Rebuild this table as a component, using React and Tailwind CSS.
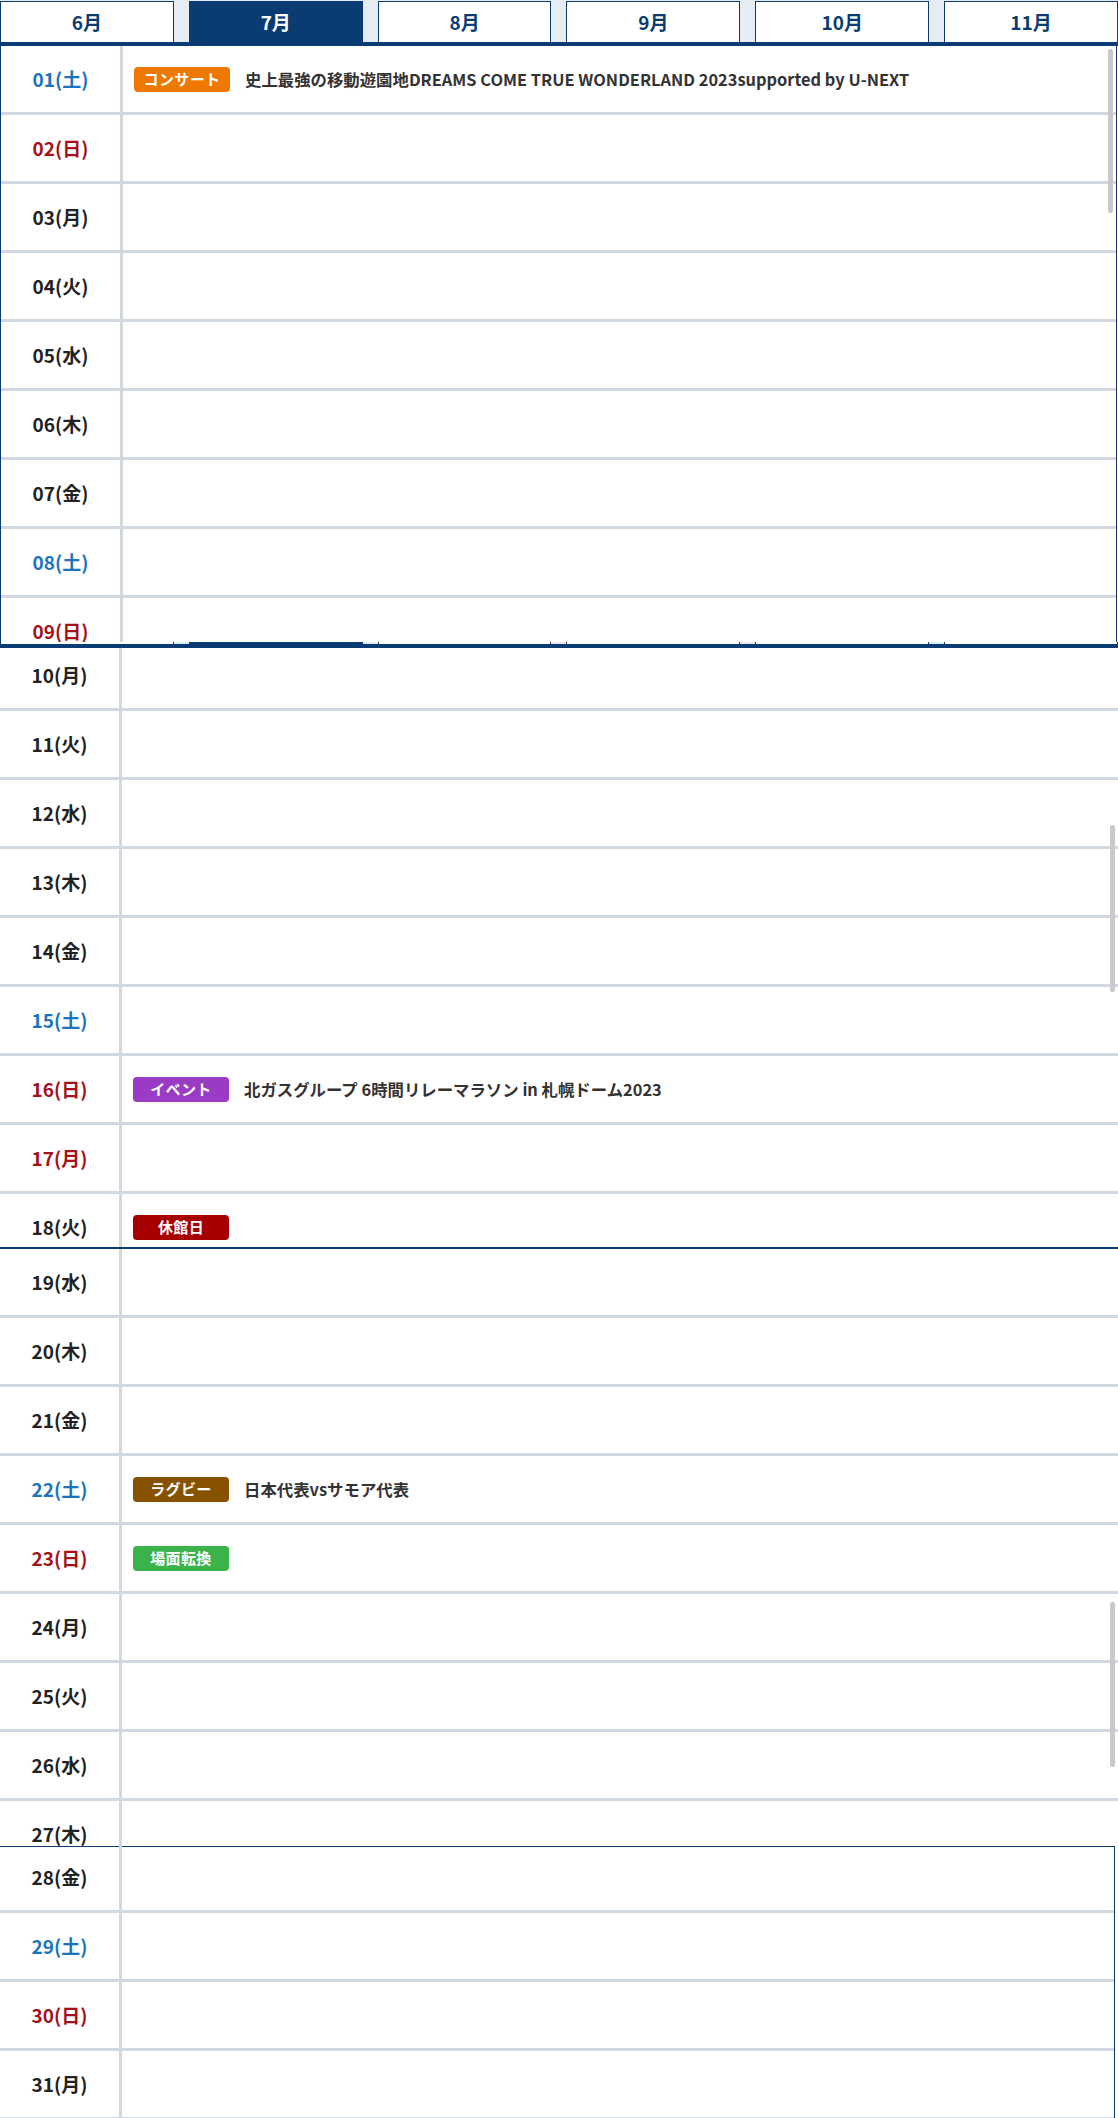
import React from "react";

const months = ["6月", "7月", "8月", "9月", "10月", "11月"];

const events = {
  1: { tag: "コンサート", color: "bg-[#ee7800]", title: "史上最強の移動遊園地DREAMS COME TRUE WONDERLAND 2023supported by U-NEXT" },
  16: { tag: "イベント", color: "bg-[#9a3bc5]", title: "北ガスグループ 6時間リレーマラソン in 札幌ドーム2023" },
  18: { tag: "休館日", color: "bg-[#a60000]" },
  22: { tag: "ラグビー", color: "bg-[#875200]", title: "日本代表vsサモア代表" },
  23: { tag: "場面転換", color: "bg-[#3cb34a]" },
};

// July 2023 starts on Saturday
const week = ["土", "日", "月", "火", "水", "木", "金"];
const holidays = [17];

function dayColor(d) {
  const w = week[(d - 1) % 7];
  if (w === "日" || holidays.includes(d)) return "text-[#a3121a]";
  if (w === "土") return "text-[#1a74bd]";
  return "text-[#222]";
}

function Row({ d }) {
  const ev = events[d];
  const label = String(d).padStart(2, "0") + "(" + week[(d - 1) % 7] + ")";
  return (
    <div className="flex h-[69px] border-b-[3px] border-[#d1d8df]">
      <div className={`flex w-[122px] shrink-0 items-center justify-center border-r-[3px] border-[#d1d8df] text-[19px] font-bold ${dayColor(d)}`}>
        {label}
      </div>
      <div className="flex flex-1 items-center gap-[15px] pl-[11px]">
        {ev && (
          <span className={`flex h-[25px] w-[96px] items-center justify-center rounded-[4px] text-[15px] font-bold tracking-wide text-white ${ev.color}`}>
            {ev.tag}
          </span>
        )}
        {ev && ev.title && <span className="text-[16.4px] font-bold text-[#333]">{ev.title}</span>}
      </div>
    </div>
  );
}

function Thumb({ className }) {
  return <div className={`absolute right-[3px] w-[5px] rounded-full bg-[#c9c9c9] ${className}`} />;
}

function range(a, b) {
  const out = [];
  for (let i = a; i <= b; i++) out.push(i);
  return out;
}

export default function App() {
  return (
    <div className="w-[1118px] bg-white" style={{ fontFamily: '"Noto Sans CJK JP", "Noto Sans", sans-serif' }}>
      {/* first capture: tabs + 01-09 */}
      <div className="relative h-[642px] overflow-hidden">
        <div className="flex h-[46px] gap-[15px] border-b-4 border-[#0a3c73] bg-[#e6ecf4] pt-[1px]">
          {months.map((m) => (
            <div
              key={m}
              className={`flex flex-1 items-center justify-center border border-b-0 border-[#0a3c73] text-[19px] font-bold ${
                m === "7月" ? "bg-[#0a3c73] text-white" : "bg-white text-[#0a3c73]"
              }`}
            >
              {m}
            </div>
          ))}
        </div>
        <div className="relative w-[1117px] border-x border-[#0a3c73]">
          {range(1, 9).map((d) => (
            <Row key={d} d={d} />
          ))}
          <Thumb className="top-[3px] h-[164px]" />
        </div>
      </div>

      {/* second capture: 10-18 */}
      <div className="relative h-[605px] overflow-hidden">
        <div className="absolute inset-x-0 top-0 z-10 flex h-[6px] flex-col">
          <div className="flex h-[2px] gap-[15px] bg-[#e6ecf4]">
            {months.map((m) => (
              <div key={m} className={`flex-1 border-x border-[#0a3c73] ${m === "7月" ? "bg-[#0a3c73]" : "bg-white"}`} />
            ))}
          </div>
          <div className="h-[4px] bg-[#0a3c73]" />
        </div>
        {range(10, 18).map((d) => (
          <Row key={d} d={d} />
        ))}
        <Thumb className="top-[183px] h-[167px]" />
      </div>
      <div className="h-[2px] bg-[#0a3c73]" />

      {/* third capture: 19-27 */}
      <div className="relative h-[597px] overflow-hidden">
        {range(19, 27).map((d) => (
          <Row key={d} d={d} />
        ))}
        <Thumb className="top-[353px] h-[165px]" />
      </div>

      {/* last capture: 28-31 */}
      <div className="h-[272px] overflow-hidden">
        <div className="w-[1115px] border-r border-t border-[#0a3c73]">
          <div className="-mt-[3px]">
            {range(28, 31).map((d) => (
              <Row key={d} d={d} />
            ))}
          </div>
        </div>
      </div>
    </div>
  );
}
